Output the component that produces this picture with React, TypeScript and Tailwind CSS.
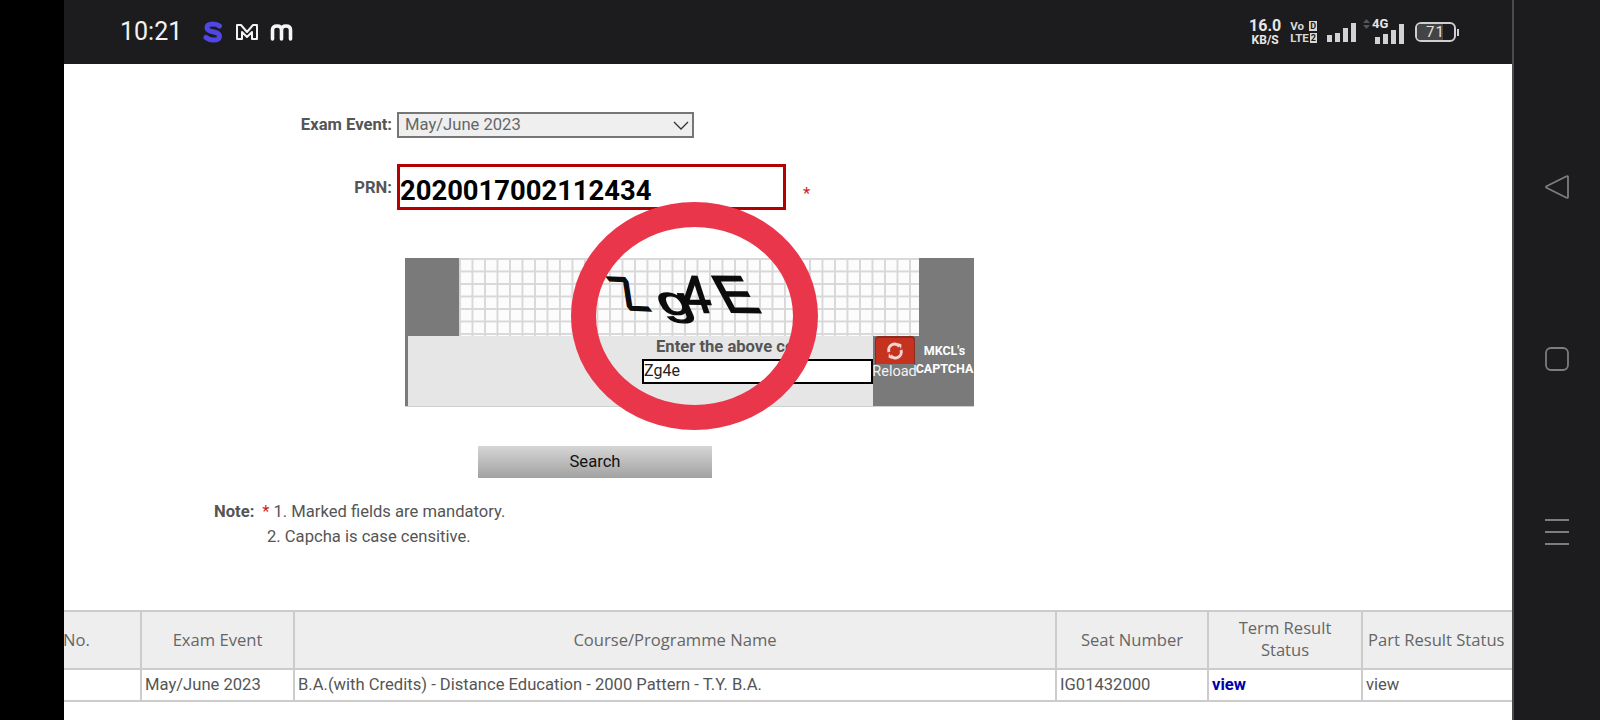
import React from "react";

const roboto = "font-['Roboto',sans-serif]";

function Captcha() {
  return (
    <div className="ml-[341px] mt-[48px] w-[569px] h-[149px] flex flex-col">
      <div className="flex h-[78px]">
        <div className="w-[54px] bg-[#7a7a7a]" />
        <div className="relative w-[460px] overflow-hidden bg-[#fcfcfc] bg-[linear-gradient(#d8d8d8_1.5px,transparent_1.5px),linear-gradient(90deg,#d8d8d8_1.5px,transparent_1.5px)] bg-[size:12.5px_12.5px]">
          <svg className="absolute left-0 top-0" width="460" height="78" viewBox="0 0 460 78">
            <g fontFamily="'Liberation Sans',sans-serif" fontSize="40" fill="#0c0c0c" stroke="#0c0c0c" strokeWidth="1.4">
              <text transform="matrix(0.95 0.04 0.91 1.2 170 52)">Z</text>
              <text transform="matrix(1.5 0.05 0.45 1 204 56)">g</text>
              <text transform="matrix(1.25 0.02 0.42 1.3 228 54)">4</text>
              <text transform="matrix(1.35 0.02 0.7 1.3 268 54)">E</text>
            </g>
          </svg>
        </div>
        <div className="w-[55px] bg-[#7a7a7a]" />
      </div>
      <div className="flex h-[71px] border-b border-[#cfcfcf]">
        <div className="w-[468px] bg-[#e6e6e6] border-l-[3px] border-[#7a7a7a] flex flex-col items-end">
          <div className="w-[217px] h-[23px] flex items-center font-bold text-[16.6px] text-[#555] whitespace-nowrap pb-[1px]">Enter the above code</div>
          <div className="w-[231px] h-[25px] border-2 border-black bg-white text-[16px] leading-[20px] text-[#222]">Zg4e</div>
        </div>
        <div className="flex-1 bg-[#7a7a7a] flex">
          <div className="w-[43px] flex flex-col items-center">
            <div className="w-[40px] h-[28px] rounded-t-[4px] bg-[#c5321f] border-t-2 border-x border-[#8f2a20] flex items-center justify-center">
              <svg width="18" height="18" viewBox="0 0 18 18" fill="none" stroke="#f6d6d0" strokeWidth="3">
                <path d="M3 10 A6 6 0 0 1 13.500 4.500" />
                <path d="M15 8 A6 6 0 0 1 4.500 13.500" />
                <path d="M12 1 L15.500 2.500 L15 7 Z" fill="#f6d6d0" stroke="none" />
                <path d="M6 17 L2.500 15.500 L3 11 Z" fill="#f6d6d0" stroke="none" />
              </svg>
            </div>
            <div className="text-[14.5px] leading-[16px] text-[#f2f2f2] whitespace-nowrap">Reload</div>
          </div>
          <div className="flex-1 pt-[6px] -ml-[1px] text-white font-bold text-[12.5px] leading-[18px] text-center whitespace-nowrap">
            <div>MKCL's</div>
            <div>CAPTCHA</div>
          </div>
        </div>
      </div>
    </div>
  );
}

function StatusBar() {
  const bars = (hs: number[]) => (
    <div className="flex items-end gap-[3px]">
      {hs.map((h, i) => (
        <div key={i} className="w-[5px] bg-[#d2d2d2]" style={{ height: h }} />
      ))}
    </div>
  );
  return (
    <div className="h-[64px] bg-[#1c1c1e] flex items-center shrink-0 pl-[56px] pr-[53px] font-['Roboto',sans-serif]">
      <span className="text-[25px] text-[#f2f2f2] w-[83px]">10:21</span>
      <svg width="20" height="22" viewBox="0 0 20 22" fill="none" stroke="#4f46e5" strokeWidth="5" strokeLinecap="round" className="mr-[12px]">
        <path d="M16.500 5 Q14 3 10 3 Q4 3 4 6.500 Q4 9.500 10 10.800 Q16.500 12 16.500 15.500 Q16.500 19 10 19 Q6 19 3 16.500" />
      </svg>
      <svg width="24" height="18" viewBox="0 0 24 18" fill="none" stroke="#f2f2f2" strokeWidth="2" className="mr-[11px]">
        <path d="M2 2 H6 L12 9 L18 2 H22 V16 H17 V9 L12 14 L7 9 V16 H2 Z" strokeLinejoin="round" />
      </svg>
      <svg width="23" height="18" viewBox="0 0 23 18" fill="none" stroke="#f6f6f6" strokeWidth="3.6" strokeLinecap="round">
        <path d="M2.500 16 V7 Q2.500 3 7 3 Q11.500 3 11.500 7 V16 M11.500 7 Q11.500 3 16 3 Q20.500 3 20.500 7 V16" />
      </svg>
      <div className="flex-1" />
      <div className="flex flex-col items-center font-bold text-[#e6e6e6] mr-[9px]">
        <span className="text-[16px] leading-[16px]">16.0</span>
        <span className="text-[12px] leading-[12px]">KB/S</span>
      </div>
      <div className="flex flex-col text-[#d8d8d8] font-bold text-[11.5px] leading-[12px] mr-[10px]">
        <div className="flex items-center justify-between">Vo<span className="ml-[1px] bg-[#d8d8d8] text-[#1c1c1e] text-[9px] leading-[10px] px-[1px]">D</span></div>
        <div className="flex items-center">LTE<span className="ml-[1px] bg-[#d8d8d8] text-[#1c1c1e] text-[9px] leading-[10px] px-[1px]">2</span></div>
      </div>
      {bars([7, 9, 14, 19])}
      <div className="relative ml-[7px] w-[41px] h-[24px] flex items-end justify-end">
        {bars([7, 10, 14, 20])}
        <span className="absolute left-[9px] -top-[3px] text-[13px] font-bold text-[#e6e6e6] leading-none">4G</span>
        <svg className="absolute left-0 -top-[1px]" width="7" height="10" viewBox="0 0 7 10" fill="#555"><path d="M3.500 0 L7 4 H0 Z M0 6 H7 L3.500 10 Z" /></svg>
      </div>
      <div className="ml-[11px] relative w-[41px] h-[20px] rounded-[6px] border-2 border-[#cfcfcf] flex items-center justify-center overflow-hidden">
        <div className="absolute left-0 top-0 bottom-0 w-[71%] bg-[#444]" />
        <span className="relative text-[15px] text-[#e0e0e0] tracking-[1px]">71</span>
      </div>
      <div className="w-[2px] h-[7px] ml-[1px] bg-[#cfcfcf]" />
    </div>
  );
}

function Table() {
  const th = "border-x-2 border-y-2 border-[#cccccc] bg-[#eeeeee] font-normal text-[16.6px] leading-[22px] text-[#666] text-center font-['Open_Sans',sans-serif] px-0";
  const td = `border-x-2 border-b-2 border-[#cccccc] text-[16.6px] px-[3px] h-[32px] ${roboto}`;
  return (
    <div className="overflow-hidden mt-auto mb-[18px]">
      <table className="border-collapse table-fixed w-[1456px]">
        <colgroup>
          <col className="w-[77px]" />
          <col className="w-[153px]" />
          <col className="w-[762px]" />
          <col className="w-[152px]" />
          <col className="w-[154px]" />
          <col className="w-[158px]" />
        </colgroup>
        <thead>
          <tr className="h-[58px]">
            <th className={`${th} !text-left !border-l-0 indent-[-1px]`}>No.</th>
            <th className={th}>Exam Event</th>
            <th className={th}>Course/Programme Name</th>
            <th className={th}>Seat Number</th>
            <th className={`${th} pb-[2px]`}>Term Result<br />Status</th>
            <th className={`${th} !text-left !pl-[5px]`}>Part Result Status</th>
          </tr>
        </thead>
        <tbody>
          <tr>
            <td className={`${td} !border-l-0`}></td>
            <td className={`${td} text-[#555]`}>May/June 2023</td>
            <td className={`${td} text-[#555]`}>B.A.(with Credits) - Distance Education - 2000 Pattern - T.Y. B.A.</td>
            <td className={`${td} text-[#555]`}>IG01432000</td>
            <td className={`${td} font-bold text-[#0000aa]`}>view</td>
            <td className={`${td} text-[#555]`}>view</td>
          </tr>
        </tbody>
      </table>
    </div>
  );
}

function Form() {
  return (
    <>
      <div className="flex items-center mt-[48px] h-[26px]">
        <div className="w-[328px] text-right font-bold text-[16.6px] text-[#555] whitespace-nowrap">Exam Event:</div>
        <div className="ml-[5px] w-[297px] h-[26px] bg-[#efefef] border-2 border-[#767676] flex items-center justify-between pl-[6px] pr-[3px] text-[16.6px] text-[#666]">
          <span>May/June 2023</span>
          <svg width="16" height="9" viewBox="0 0 16 9" fill="none" stroke="#333" strokeWidth="1.3"><path d="M1 1 L8 8 L15 1" /></svg>
        </div>
      </div>
      <div className="flex items-start mt-[26px] h-[46px]">
        <div className="w-[328px] text-right font-bold text-[16.6px] text-[#555] pt-[12px]">PRN:</div>
        <div className="ml-[5px] w-[389px] h-[46px] border-[3px] border-[#b30000] flex items-center pt-[10px] font-bold text-[27.4px] text-black bg-white">2020017002112434</div>
        <div className="ml-[17px] mt-[18px] text-[#cc2222] text-[16.6px]">*</div>
      </div>
      <Captcha />
      <div className="ml-[414px] mt-[39px] w-[234px] h-[32px] bg-gradient-to-b from-[#d6d6d6] to-[#a2a2a2] flex items-center justify-center text-[16.6px] text-[#111]">Search</div>
      <div className="ml-[150px] mt-[21px] text-[16.6px] leading-[25px] text-[#555]">
        <div className="flex">
          <span className="font-bold">Note:</span>
          <span className="text-[#cc2222] ml-[8px] mr-[4px]">*</span>
          <span>1. Marked fields are mandatory.</span>
        </div>
        <div className="pl-[53px]">2. Capcha is case censitive.</div>
      </div>
    </>
  );
}

export default function App() {
  return (
    <div className={`relative w-[1600px] h-[720px] overflow-hidden flex bg-black ${roboto}`}>
      <div className="w-[64px] shrink-0 bg-black" />
      <div className="w-[1448px] shrink-0 flex flex-col bg-white">
        <StatusBar />
        <div className="flex-1 flex flex-col bg-white min-h-0">
          <Form />
          <Table />
        </div>
      </div>
      <div className="w-[88px] shrink-0 bg-[#1c1c1e] border-l-2 border-[#4a4a50] flex flex-col items-center pt-[174px]">
        <svg width="26" height="26" viewBox="0 0 26 26" fill="none" stroke="#7d7d7d" strokeWidth="1.8" strokeLinejoin="round"><path d="M24 3 V23 Q24 24.500 22 23.500 L2.500 13.800 Q1.500 13 2.500 12.200 L22 2.500 Q24 1.500 24 3 Z" /></svg>
        <svg className="mt-[146px]" width="26" height="26" viewBox="0 0 26 26" fill="none" stroke="#7d7d7d" strokeWidth="1.8"><rect x="2" y="2" width="22" height="22" rx="5" /></svg>
        <div className="mt-[147px] w-[24px] flex flex-col gap-[10px]">
          <div className="h-[2px] bg-[#7d7d7d]" />
          <div className="h-[2px] bg-[#7d7d7d]" />
          <div className="h-[2px] bg-[#7d7d7d]" />
        </div>
      </div>
      <div className="absolute left-[571px] top-[202px] w-[247px] h-[228px] rounded-[50%] border-[25px] border-[#ea364b]" />
    </div>
  );
}
